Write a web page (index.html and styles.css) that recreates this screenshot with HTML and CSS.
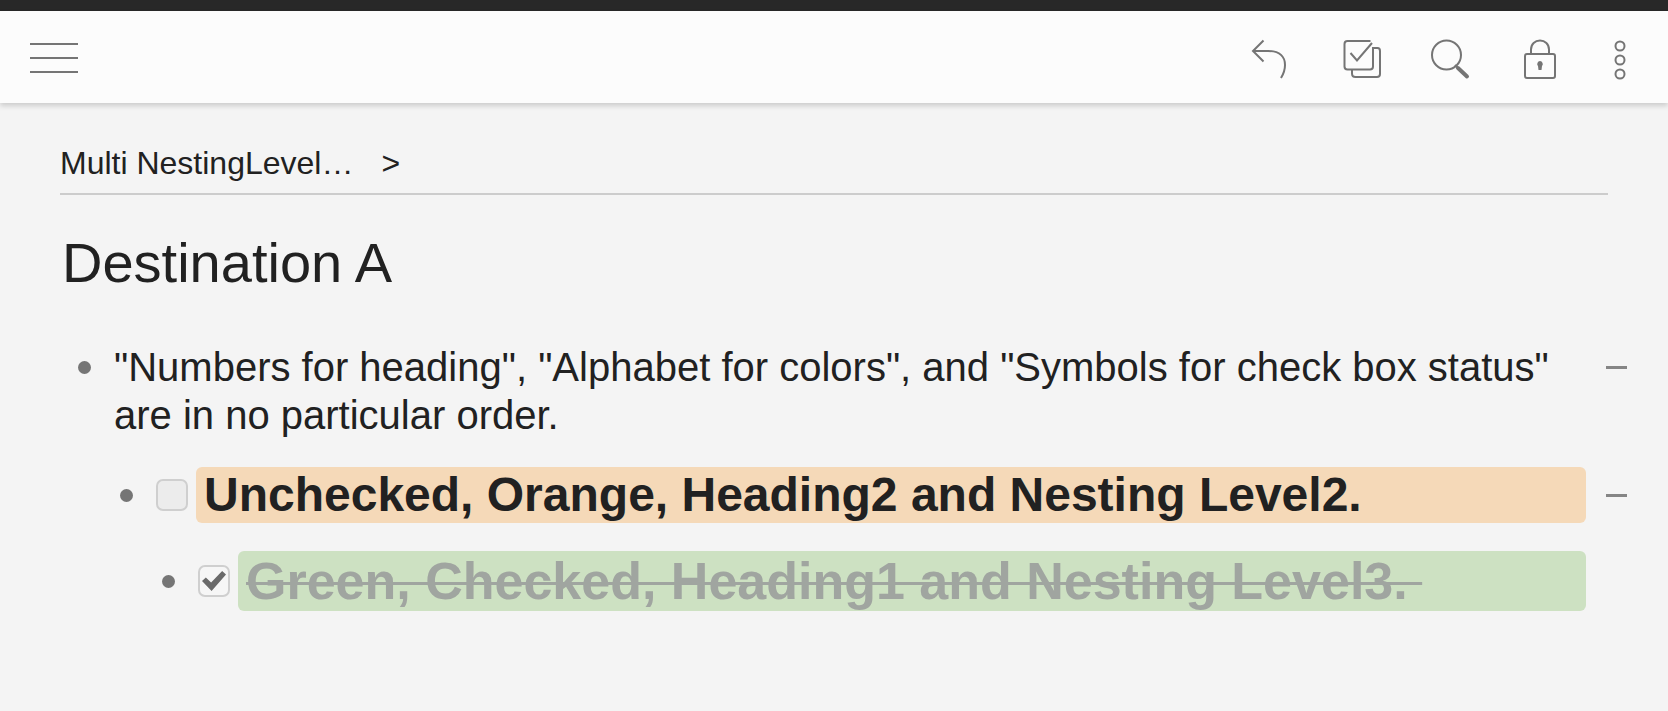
FILE: index.html
```html
<!DOCTYPE html>
<html lang="en">
  <head>
    <meta charset="UTF-8" />
    <meta name="viewport" content="width=device-width, initial-scale=1.0" />
    <title>Destination A</title>
    <link rel="stylesheet" href="styles.css">
  </head>
  <body>
    <div class="statusbar"></div>
    <header class="toolbar">
      <button class="tool menu" type="button" aria-label="Menu">
        <svg width="48" height="40" viewBox="0 0 48 40">
          <path d="M0 5H48M0 19H48M0 33H48" />
        </svg>
      </button>
      <button class="tool" type="button" aria-label="Undo">
        <svg width="40" height="40" viewBox="0 0 40 40">
          <path d="M13.500 1.500L3 12L13.500 22.500M3 12H18C30 12 35 18 35 26C35 31 33.500 35 31 39" />
        </svg>
      </button>
      <button class="tool" type="button" aria-label="Select items">
        <svg width="40" height="40" viewBox="0 0 40 40">
          <path d="M30.500 2H7.500Q4.500 2 4.500 5V27.500Q4.500 30.500 7.500 30.500H30Q33 30.500 33 27.500V8" />
          <path d="M10.500 14L17 21.500L32 4" />
          <path d="M33 9H37.500Q40 9 40 12V35Q40 38 37 38H15.500Q12 38 12 34.500V31" />
        </svg>
      </button>
      <button class="tool" type="button" aria-label="Search">
        <svg width="40" height="40" viewBox="0 0 40 40">
          <circle cx="16.500" cy="16" r="14.500" />
          <path d="M28 29L37 37.500" class="handle" />
          <path d="M25 26L29 30" />
        </svg>
      </button>
      <button class="tool" type="button" aria-label="Lock">
        <svg width="40" height="40" viewBox="0 0 40 40">
          <rect x="5" y="15" width="30" height="24" rx="2" />
          <path d="M11 15V10.500C11 5 15 1.500 20 1.500S29 5 29 10.500V15" />
          <path d="M20 22a3 3 0 0 1 2 5L21.500 31h-3L18 27a3 3 0 0 1 2-5z" class="solid" />
        </svg>
      </button>
      <button class="tool" type="button" aria-label="More">
        <svg width="20" height="40" viewBox="0 0 20 40">
          <circle cx="10" cy="7" r="4.500" />
          <circle cx="10" cy="21" r="4.500" />
          <circle cx="10" cy="35" r="4.500" />
        </svg>
      </button>
    </header>

    <main class="page">
      <nav class="breadcrumb">
        <a href="#">Multi NestingLevel…</a>
        <span>&gt;</span>
      </nav>
      <h1 class="title">Destination A</h1>

      <ul class="outline">
        <li>
          <div class="row">
            <span class="bullet"></span>
            <p class="text">"Numbers for heading", "Alphabet for colors", and "Symbols for check box status" are in no particular order.</p>
            <button class="fold" type="button" aria-label="Collapse"></button>
          </div>
          <ul>
            <li>
              <div class="row">
                <span class="bullet"></span>
                <input class="check" type="checkbox" id="item2" />
                <label class="text heading2 orange" for="item2">Unchecked, Orange, Heading2 and Nesting Level2.</label>
                <button class="fold" type="button" aria-label="Collapse"></button>
              </div>
              <ul>
                <li>
                  <div class="row">
                    <span class="bullet"></span>
                    <input class="check" type="checkbox" id="item3" checked />
                    <label class="text heading1 green done" for="item3">Green, Checked, Heading1 and Nesting Level3.&nbsp;</label>
                  </div>
                </li>
              </ul>
            </li>
          </ul>
        </li>
      </ul>
    </main>
  </body>
</html>
```

FILE: styles.css
```css
* {
  box-sizing: border-box;
}
body {
  margin: 0;
  background-color: #f4f4f4;
  color: #212121;
  font-family: "Liberation Sans", Arial, sans-serif;
}
button {
  padding: 0;
  border: none;
  background: none;
  cursor: pointer;
}
ul {
  list-style: none;
  margin: 0;
  padding: 0;
}

/* top bars */
.statusbar {
  height: 11px;
  background-color: #282828;
}
.toolbar {
  display: flex;
  gap: 50px;
  padding: 28px 38px 24px 30px;
  background-color: #fcfcfc;
  box-shadow: 0 3px 5px rgba(0, 0, 0, 0.16);
}
.tool svg {
  display: block;
  overflow: visible;
  fill: none;
  stroke: #757575;
  stroke-width: 2;
}
.tool .handle {
  stroke-width: 4;
  stroke-linecap: round;
}
.tool .solid {
  fill: #757575;
  stroke: none;
}
.menu {
  margin-right: auto;
}

/* page */
.page {
  padding: 42px 20px 60px 60px;
}
.breadcrumb {
  display: flex;
  gap: 28px;
  margin-right: 40px;
  padding-bottom: 12px;
  border-bottom: 2px solid #cccccc;
  font-size: 32px;
  line-height: 36px;
}
.breadcrumb a {
  color: inherit;
  text-decoration: none;
}
.title {
  margin: 0;
  padding: 36px 2px 48px;
  font-size: 56px;
  font-weight: normal;
  line-height: 64px;
}

/* outline */
.outline {
  padding-left: 4px;
}
.outline ul {
  padding-left: 42px;
}
.row {
  display: flex;
  align-items: center;
  margin-bottom: 28px;
  padding-right: 62px;
}
.row:has(.fold) {
  padding-right: 0;
}
.row:has(p) {
  align-items: flex-start;
}
.bullet {
  display: flex;
  align-items: center;
  justify-content: center;
  width: 40px;
  height: 48px;
}
.bullet::before {
  content: "";
  width: 13px;
  height: 13px;
  border-radius: 50%;
  background-color: #757575;
}
.text {
  flex: 1;
  margin: 0;
  padding: 0 8px;
  border-radius: 6px;
  font-size: 40px;
  line-height: 48px;
}
p.text {
  padding: 0 10px;
}
.heading1 {
  font-size: 52px;
  font-weight: bold;
  line-height: 60px;
}
.heading2 {
  font-size: 48px;
  font-weight: bold;
  line-height: 56px;
}
.orange {
  background-color: #f5d9b8;
}
.green {
  background-color: #cde1c2;
}
.done {
  color: #a0a5a0;
  text-decoration: line-through;
  text-decoration-thickness: 3px;
}
.check {
  appearance: none;
  display: grid;
  place-items: center;
  width: 32px;
  height: 32px;
  margin: 0 8px 0 10px;
  border: 2px solid #cfcfcf;
  border-radius: 7px;
  background-color: #ececec;
}
.check:checked {
  background-color: #f6f6f6;
}
.check:checked::before {
  content: "";
  width: 24px;
  height: 20px;
  background-color: #6a6a6a;
  clip-path: polygon(0 50%, 16% 33%, 38% 58%, 84% 0, 100% 17%, 40% 100%);
}
.fold {
  display: grid;
  place-items: center;
  width: 62px;
  height: 48px;
  padding-right: 2px;
}
.fold::before {
  content: "";
  width: 21px;
  height: 3px;
  background-color: #858585;
}
```
